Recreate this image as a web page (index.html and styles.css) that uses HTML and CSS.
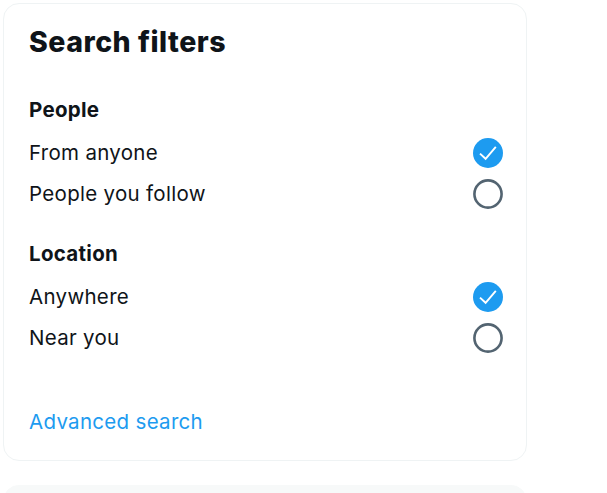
FILE: index.html
```html
<!DOCTYPE html>
<html lang="en">
<head>
<meta charset="utf-8">
<title>Search filters</title>
<link rel="stylesheet" href="styles.css">
</head>
<body>
<div class="column">
  <section class="card">
    <h2 class="title">Search filters</h2>
    <div class="group">
      <h3 class="group-title">People</h3>
      <div class="row"><span>From anyone</span>
        <svg class="radio" viewBox="0 0 30 30"><circle cx="15" cy="15" r="15" fill="#1d9bf0"/><path d="M7 15.6l5.6 5.2 10.2-12" fill="none" stroke="#fff" stroke-width="1.9"/></svg>
      </div>
      <div class="row"><span>People you follow</span>
        <svg class="radio" viewBox="0 0 30 30"><circle cx="15" cy="15" r="13.6" fill="none" stroke="#536471" stroke-width="2.6"/></svg>
      </div>
    </div>
    <div class="group second">
      <h3 class="group-title">Location</h3>
      <div class="row"><span>Anywhere</span>
        <svg class="radio" viewBox="0 0 30 30"><circle cx="15" cy="15" r="15" fill="#1d9bf0"/><path d="M7 15.6l5.6 5.2 10.2-12" fill="none" stroke="#fff" stroke-width="1.9"/></svg>
      </div>
      <div class="row"><span>Near you</span>
        <svg class="radio" viewBox="0 0 30 30"><circle cx="15" cy="15" r="13.6" fill="none" stroke="#536471" stroke-width="2.6"/></svg>
      </div>
    </div>
    <a class="advanced" href="#">Advanced search</a>
  </section>
  <section class="card next"></section>
</div>
</body>
</html>
```
FILE: styles.css
```css
html, body {
  margin: 0;
  padding: 0;
  background: #ffffff;
}
body {
  font-family: Inter, "Noto Sans", "Liberation Sans", sans-serif;
  color: #0f1419;
}
.column {
  padding: 3px 0 0 3px;
  width: 524px;
}
.card {
  border: 1px solid #eff3f4;
  border-radius: 16px;
  padding: 0 23px 16px 25px;
  display: flex;
  flex-direction: column;
}
.title {
  margin: 0;
  height: 76px;
  line-height: 76px;
  font-size: 28.5px;
  font-weight: 800;
  letter-spacing: 0.5px;
}
.group {
  margin-top: 8px;
  display: flex;
  flex-direction: column;
}
.group.second {
  margin-top: 18px;
}
.group-title {
  margin: 0;
  height: 44px;
  line-height: 44px;
  font-size: 20.5px;
  font-weight: 700;
  letter-spacing: 0.3px;
}
.row {
  height: 41px;
  display: flex;
  align-items: center;
  justify-content: space-between;
  font-size: 20.5px;
  letter-spacing: 0.3px;
}
.radio {
  width: 30px;
  height: 30px;
  display: block;
}
.advanced {
  margin-top: 42px;
  height: 44px;
  line-height: 44px;
  font-size: 20.5px;
  letter-spacing: 0.3px;
  color: #1d9bf0;
  text-decoration: none;
  align-self: flex-start;
}
.card.next {
  margin-top: 24px;
  height: 200px;
  background: #f7f9f9;
  border-color: #f7f9f9;
  padding: 0;
}
```
